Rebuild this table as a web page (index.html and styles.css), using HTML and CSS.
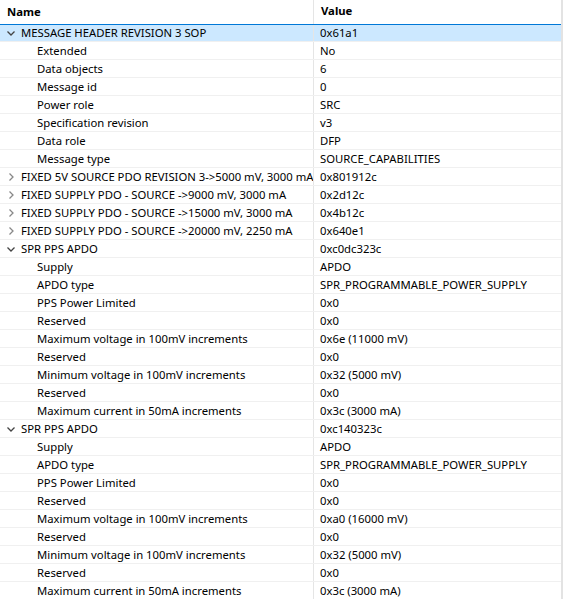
FILE: index.html
```html
<!DOCTYPE html>
<html>
<head>
<meta charset="utf-8">
<link rel="stylesheet" href="styles.css">
</head>
<body>
<div class="tree">
  <div class="row head"><div class="c1">Name</div><div class="c2">Value</div></div>
  <div class="row sel"><div class="c1 top"><svg class="chev" viewBox="0 0 10 10"><polyline points="1.5,3.5 5,7 8.5,3.5"/></svg>MESSAGE HEADER REVISION 3 SOP</div><div class="c2">0x61a1</div></div>
  <div class="row"><div class="c1 kid">Extended</div><div class="c2">No</div></div>
  <div class="row"><div class="c1 kid">Data objects</div><div class="c2">6</div></div>
  <div class="row"><div class="c1 kid">Message id</div><div class="c2">0</div></div>
  <div class="row"><div class="c1 kid">Power role</div><div class="c2">SRC</div></div>
  <div class="row"><div class="c1 kid">Specification revision</div><div class="c2">v3</div></div>
  <div class="row"><div class="c1 kid">Data role</div><div class="c2">DFP</div></div>
  <div class="row"><div class="c1 kid">Message type</div><div class="c2">SOURCE_CAPABILITIES</div></div>
  <div class="row"><div class="c1 top"><svg class="chev r" viewBox="0 0 10 10"><polyline points="3.5,1.5 7,5 3.5,8.5"/></svg>FIXED 5V SOURCE PDO REVISION 3-&gt;5000 mV, 3000 mA</div><div class="c2">0x801912c</div></div>
  <div class="row"><div class="c1 top"><svg class="chev r" viewBox="0 0 10 10"><polyline points="3.5,1.5 7,5 3.5,8.5"/></svg>FIXED SUPPLY PDO - SOURCE -&gt;9000 mV, 3000 mA</div><div class="c2">0x2d12c</div></div>
  <div class="row"><div class="c1 top"><svg class="chev r" viewBox="0 0 10 10"><polyline points="3.5,1.5 7,5 3.5,8.5"/></svg>FIXED SUPPLY PDO - SOURCE -&gt;15000 mV, 3000 mA</div><div class="c2">0x4b12c</div></div>
  <div class="row"><div class="c1 top"><svg class="chev r" viewBox="0 0 10 10"><polyline points="3.5,1.5 7,5 3.5,8.5"/></svg>FIXED SUPPLY PDO - SOURCE -&gt;20000 mV, 2250 mA</div><div class="c2">0x640e1</div></div>
  <div class="row"><div class="c1 top"><svg class="chev" viewBox="0 0 10 10"><polyline points="1.5,3.5 5,7 8.5,3.5"/></svg>SPR PPS APDO</div><div class="c2">0xc0dc323c</div></div>
  <div class="row"><div class="c1 kid">Supply</div><div class="c2">APDO</div></div>
  <div class="row"><div class="c1 kid">APDO type</div><div class="c2">SPR_PROGRAMMABLE_POWER_SUPPLY</div></div>
  <div class="row"><div class="c1 kid">PPS Power Limited</div><div class="c2">0x0</div></div>
  <div class="row"><div class="c1 kid">Reserved</div><div class="c2">0x0</div></div>
  <div class="row"><div class="c1 kid">Maximum voltage in 100mV increments</div><div class="c2">0x6e (11000 mV)</div></div>
  <div class="row"><div class="c1 kid">Reserved</div><div class="c2">0x0</div></div>
  <div class="row"><div class="c1 kid">Minimum voltage in 100mV increments</div><div class="c2">0x32 (5000 mV)</div></div>
  <div class="row"><div class="c1 kid">Reserved</div><div class="c2">0x0</div></div>
  <div class="row"><div class="c1 kid">Maximum current in 50mA increments</div><div class="c2">0x3c (3000 mA)</div></div>
  <div class="row"><div class="c1 top"><svg class="chev" viewBox="0 0 10 10"><polyline points="1.5,3.5 5,7 8.5,3.5"/></svg>SPR PPS APDO</div><div class="c2">0xc140323c</div></div>
  <div class="row"><div class="c1 kid">Supply</div><div class="c2">APDO</div></div>
  <div class="row"><div class="c1 kid">APDO type</div><div class="c2">SPR_PROGRAMMABLE_POWER_SUPPLY</div></div>
  <div class="row"><div class="c1 kid">PPS Power Limited</div><div class="c2">0x0</div></div>
  <div class="row"><div class="c1 kid">Reserved</div><div class="c2">0x0</div></div>
  <div class="row"><div class="c1 kid">Maximum voltage in 100mV increments</div><div class="c2">0xa0 (16000 mV)</div></div>
  <div class="row"><div class="c1 kid">Reserved</div><div class="c2">0x0</div></div>
  <div class="row"><div class="c1 kid">Minimum voltage in 100mV increments</div><div class="c2">0x32 (5000 mV)</div></div>
  <div class="row"><div class="c1 kid">Reserved</div><div class="c2">0x0</div></div>
  <div class="row"><div class="c1 kid">Maximum current in 50mA increments</div><div class="c2">0x3c (3000 mA)</div></div>
</div>
</body>
</html>
```
FILE: styles.css
```css
html, body {
  margin: 0;
  padding: 0;
  background: #fff;
}
body {
  font-family: "Noto Sans", "Open Sans", sans-serif;
  font-size: 11.3px;
  color: #000;
  overflow: hidden;
}
.tree {
  width: 561px;
  border-right: 2px solid #e3e3e3;
  height: 599px;
  overflow: hidden;
}
.row {
  display: grid;
  grid-template-columns: 314px 1fr;
  height: 18px;
  box-sizing: border-box;
  border-bottom: 1px solid #f0f0f0;
  line-height: 17px;
  white-space: nowrap;
}
.row .c1 {
  border-right: 1px solid #e5e5e5;
  overflow: hidden;
  display: flex;
  align-items: center;
}
.row .c2 {
  padding-left: 6px;
}
.head {
  height: 24px;
  line-height: 22px;
  border-bottom: none;
  font-weight: bold;
}
.head .c1 {
  padding-left: 7px;
}
.head .c2 {
  padding-left: 7px;
}
.sel {
  background: #cce8ff;
  border-top: 1px solid #0078d7;
  height: 18px;
  line-height: 16px;
}
.top {
  padding-left: 6px;
}
.kid {
  padding-left: 37px;
}
.chev {
  width: 10px;
  height: 10px;
  margin-right: 5px;
  flex: none;
  fill: none;
  stroke: #444;
  stroke-width: 1.3;
}
.chev.r {
  stroke: #888;
}
```
